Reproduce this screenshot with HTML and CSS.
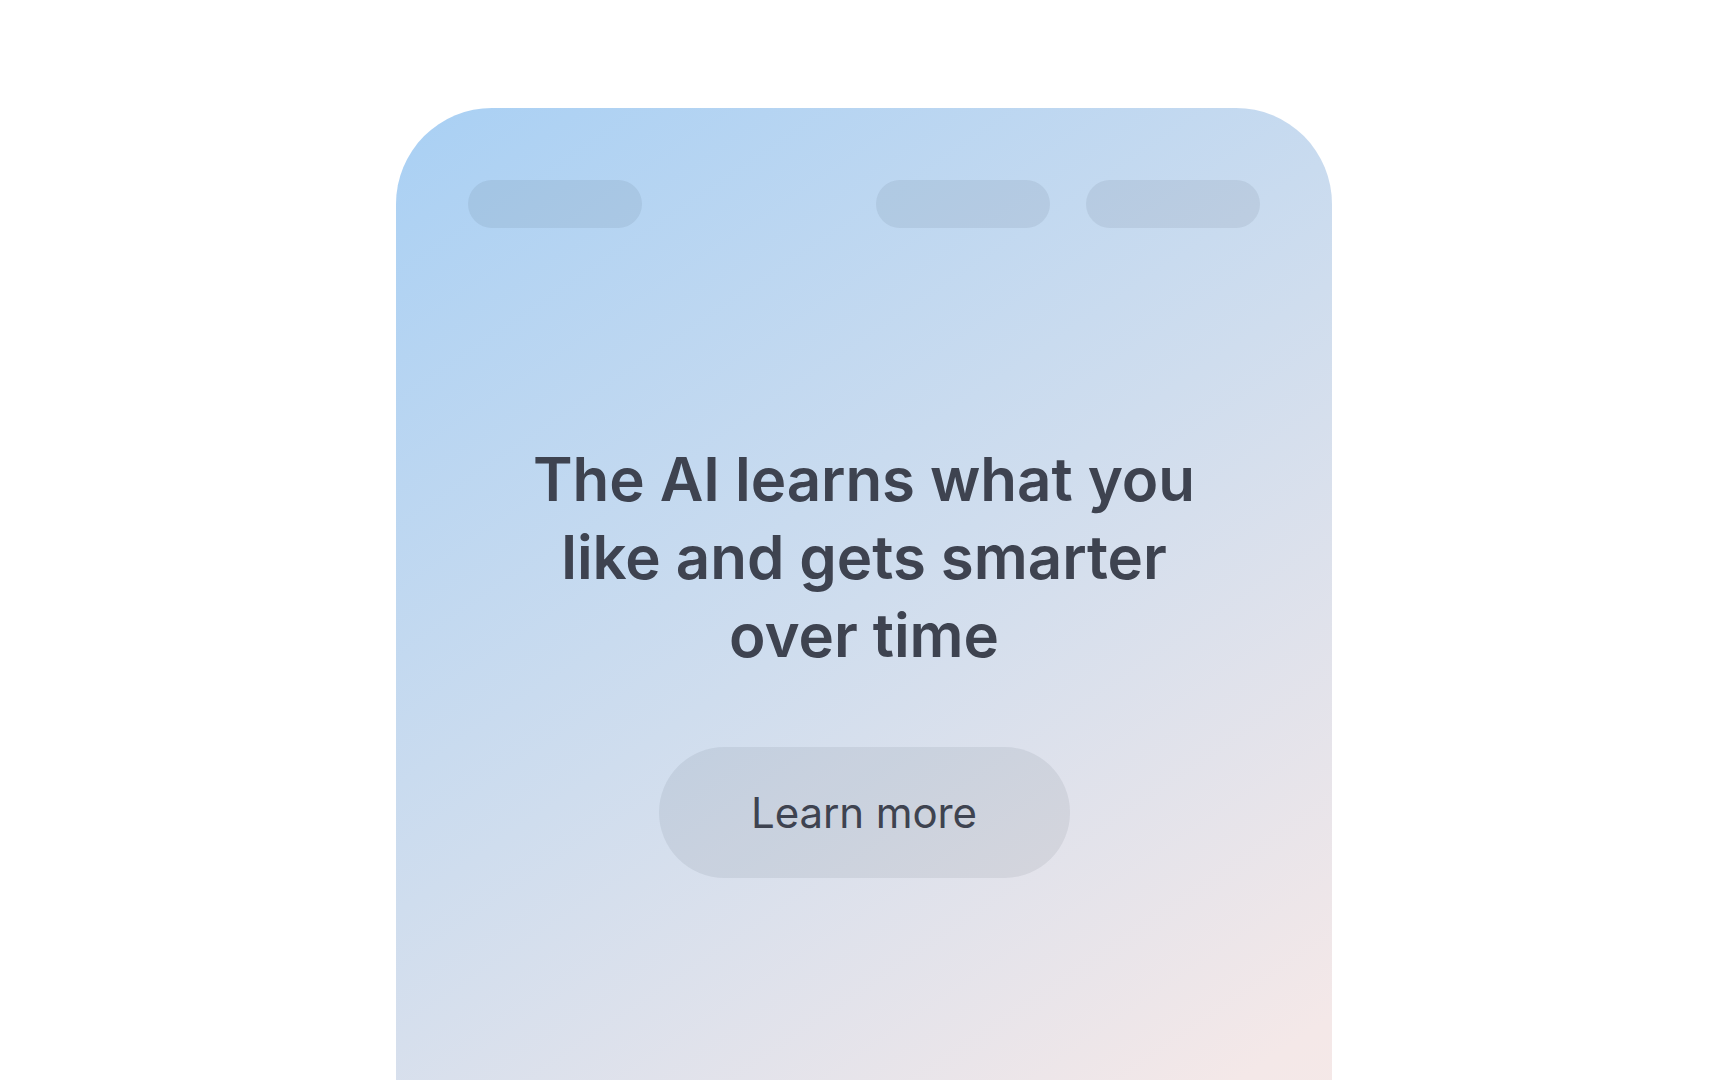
FILE: index.html
```html
<!DOCTYPE html>
<html lang="en">
<head>
  <meta charset="UTF-8">
  <meta name="viewport" content="width=device-width, initial-scale=1.0">
  <title>Learns what you like</title>
  <link rel="stylesheet" href="styles.css">
</head>
<body>
  <main class="page">
    <section class="card">
      <nav class="nav">
        <span class="pill"></span>
        <div class="nav-right">
          <span class="pill"></span>
          <span class="pill"></span>
        </div>
      </nav>
      <div class="hero">
        <h1>The AI learns what you like and gets smarter over time</h1>
        <button class="cta">Learn more</button>
      </div>
    </section>
  </main>
</body>
</html>
```

FILE: styles.css
```css
:root{--ink:#3e4350;--shade:rgba(30,41,59,.075);}
*{box-sizing:border-box;font-family:'Inter','Noto Sans',sans-serif;}
html,body{margin:0;background:#fff;}
body{overflow:hidden;}
.page{display:flex;justify-content:center;padding-top:108px;}
.card{width:936px;height:1120px;border-radius:96px;padding:72px;background:linear-gradient(146deg,#a9d0f4 0%,#cfddee 46%,#f4e8e8 88%,#f6e8e6 100%);}
.nav{display:flex;justify-content:space-between;}
.nav-right{display:flex;gap:36px;}
.pill{display:block;width:174px;height:48px;border-radius:24px;background:var(--shade);}
.hero{display:flex;flex-direction:column;align-items:center;margin-top:212px;}
h1{margin:0;max-width:700px;text-align:center;font-size:60px;line-height:78px;font-weight:600;color:var(--ink);letter-spacing:-.05px;}
.cta{margin-top:73px;width:411px;height:131px;border:none;border-radius:66px;background:var(--shade);color:var(--ink);font-size:42px;font-weight:400;letter-spacing:-.1px;cursor:pointer;}
```
